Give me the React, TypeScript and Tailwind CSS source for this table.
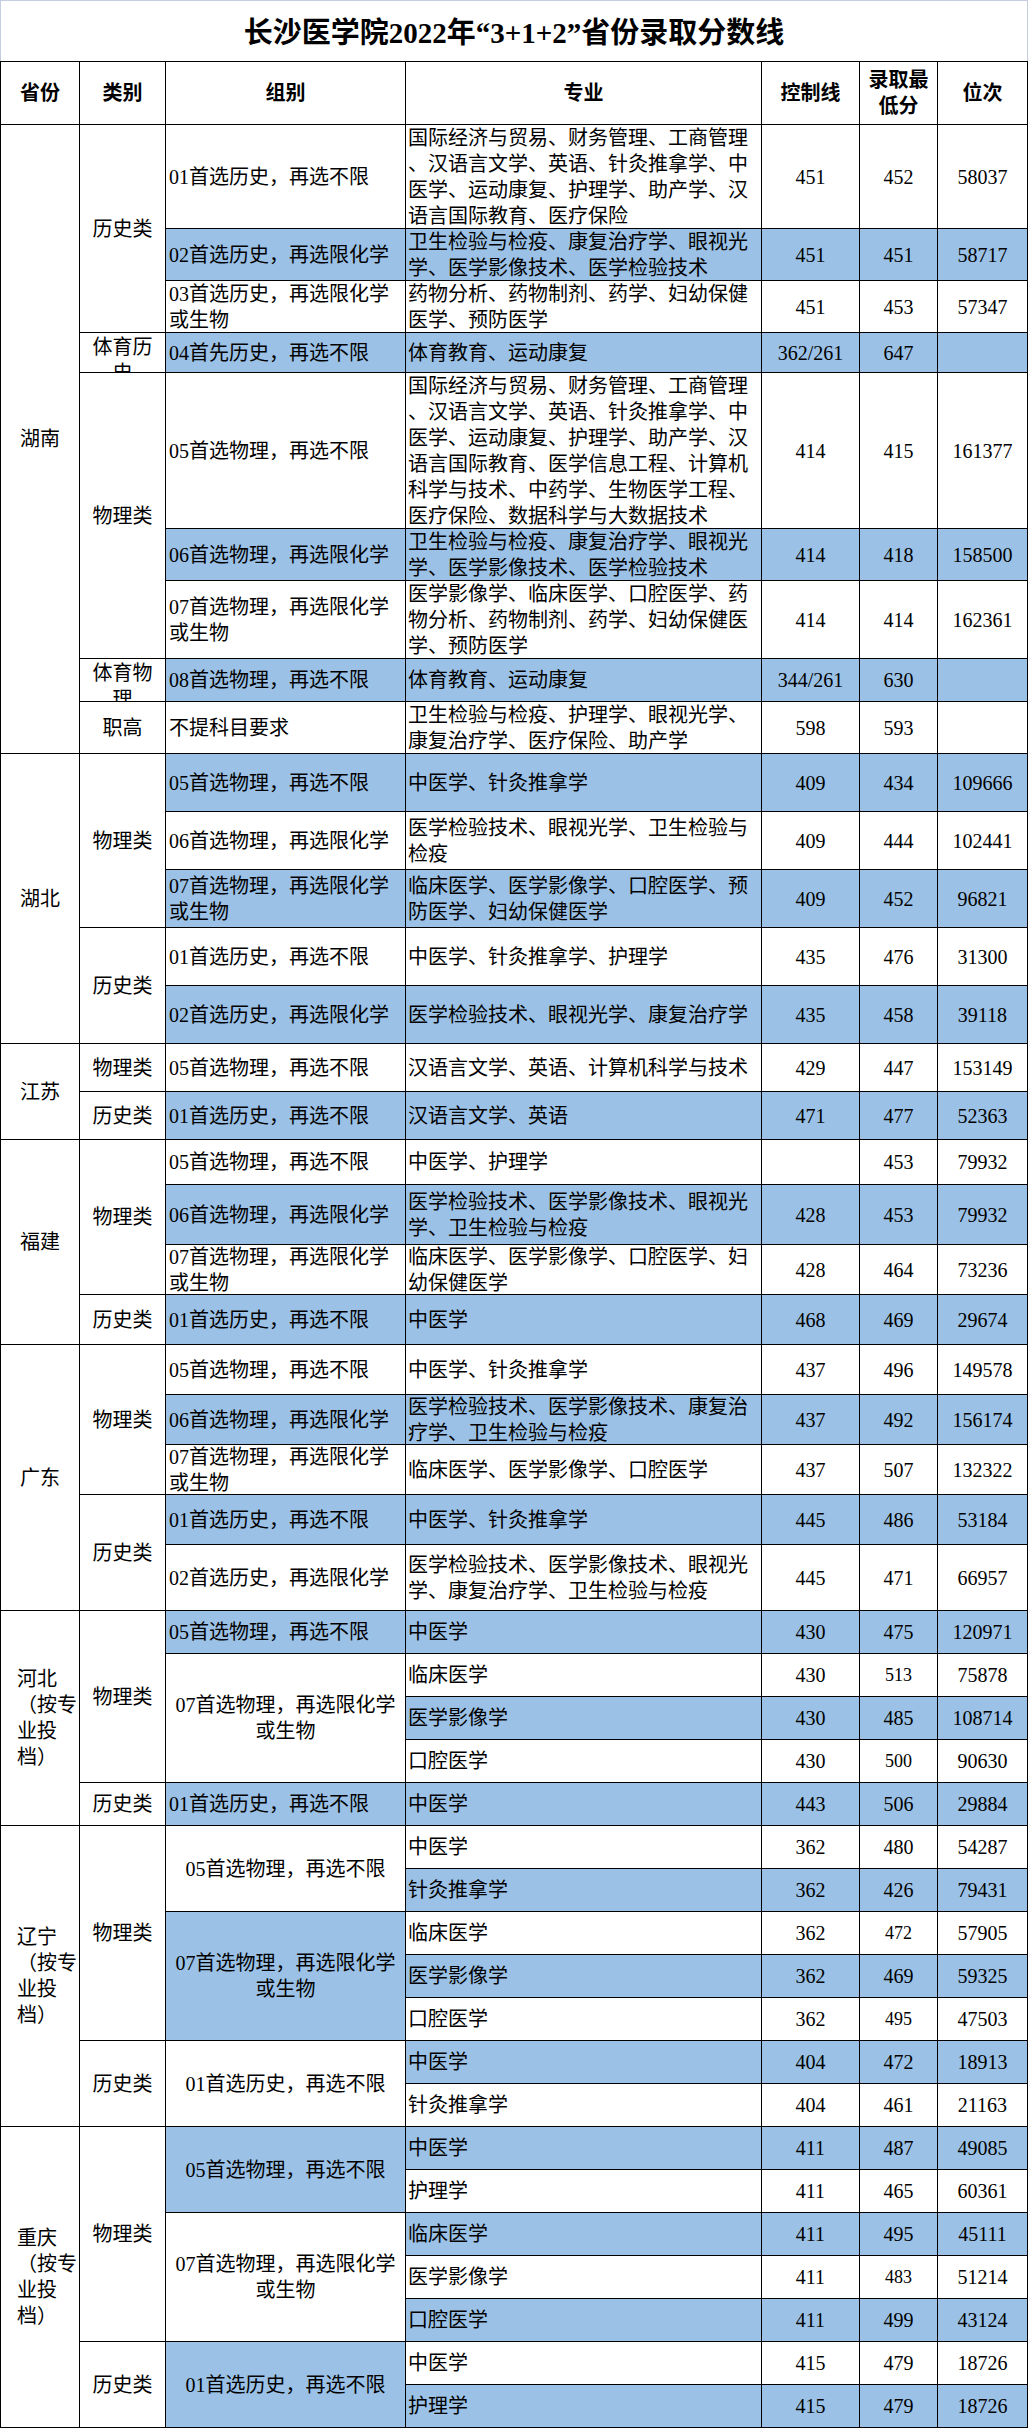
import React from 'react';

type Kind = 'head' | 'prov' | 'provL' | 'cat' | 'catTop' | 'grp' | 'grpC' | 'maj' | 'num';

type Cell = {
  lines: string[];
  kind: Kind;
  span?: number;
  blue?: boolean;
  small?: boolean;
};

const KIND: Record<Kind, string> = {
  head: 'items-center justify-center text-center font-bold',
  prov: 'items-center justify-center text-center',
  provL: 'items-center justify-start pl-[16px]',
  cat: 'items-center justify-center text-center',
  catTop: 'items-start justify-center text-center pt-px',
  grp: 'items-center justify-start pl-[3px]',
  grpC: 'items-center justify-center text-center',
  maj: 'items-center justify-start pl-[2px]',
  num: 'items-center justify-center',
};

const SPAN: Record<number, string> = {
  1: '',
  2: 'row-span-2',
  3: 'row-span-3',
  4: 'row-span-4',
  5: 'row-span-5',
  7: 'row-span-7',
  9: 'row-span-9',
};

const L = (s: string) => s.split('|');

const prov = (t: string, span: number, left = false): Cell => ({ lines: L(t), kind: left ? 'provL' : 'prov', span });
const cat = (t: string, span = 1, top = false): Cell => ({ lines: L(t), kind: top ? 'catTop' : 'cat', span });
const grpC = (t: string, span: number, blue = false): Cell => ({ lines: L(t), kind: 'grpC', span, blue });

// 组别 + 专业 + 控制线 + 最低分 + 位次, one line of the sheet
function row(grp: string, maj: string, a: string, b: string, c: string, blue = false, small = false): Cell[] {
  return [
    { lines: L(grp), kind: 'grp', blue },
    ...tail(maj, a, b, c, blue, small),
  ];
}

// 专业 onwards, for rows whose 组别 is merged
function tail(maj: string, a: string, b: string, c: string, blue = false, small = false): Cell[] {
  return [
    { lines: L(maj), kind: 'maj', blue },
    { lines: [a], kind: 'num', blue },
    { lines: [b], kind: 'num', blue, small },
    { lines: [c], kind: 'num', blue },
  ];
}

const G01 = '01首选历史，再选不限';
const G02 = '02首选历史，再选限化学';
const G03 = '03首选历史，再选限化学|或生物';
const G05 = '05首选物理，再选不限';
const G06 = '06首选物理，再选限化学';
const G07 = '07首选物理，再选限化学|或生物';

const cells: Cell[] = [
  { lines: ['省份'], kind: 'head' },
  { lines: ['类别'], kind: 'head' },
  { lines: ['组别'], kind: 'head' },
  { lines: ['专业'], kind: 'head' },
  { lines: ['控制线'], kind: 'head' },
  { lines: ['录取最', '低分'], kind: 'head' },
  { lines: ['位次'], kind: 'head' },

  // 湖南
  prov('湖南', 9),
  cat('历史类', 3),
  ...row(G01, '国际经济与贸易、财务管理、工商管理|、汉语言文学、英语、针灸推拿学、中|医学、运动康复、护理学、助产学、汉|语言国际教育、医疗保险', '451', '452', '58037'),
  ...row(G02, '卫生检验与检疫、康复治疗学、眼视光|学、医学影像技术、医学检验技术', '451', '451', '58717', true),
  ...row(G03, '药物分析、药物制剂、药学、妇幼保健|医学、预防医学', '451', '453', '57347'),
  cat('体育历|史', 1, true),
  ...row('04首先历史，再选不限', '体育教育、运动康复', '362/261', '647', '', true),
  cat('物理类', 3),
  ...row(G05, '国际经济与贸易、财务管理、工商管理|、汉语言文学、英语、针灸推拿学、中|医学、运动康复、护理学、助产学、汉|语言国际教育、医学信息工程、计算机|科学与技术、中药学、生物医学工程、|医疗保险、数据科学与大数据技术', '414', '415', '161377'),
  ...row(G06, '卫生检验与检疫、康复治疗学、眼视光|学、医学影像技术、医学检验技术', '414', '418', '158500', true),
  ...row(G07, '医学影像学、临床医学、口腔医学、药|物分析、药物制剂、药学、妇幼保健医|学、预防医学', '414', '414', '162361'),
  cat('体育物|理', 1, true),
  ...row('08首选物理，再选不限', '体育教育、运动康复', '344/261', '630', '', true),
  cat('职高'),
  ...row('不提科目要求', '卫生检验与检疫、护理学、眼视光学、|康复治疗学、医疗保险、助产学', '598', '593', ''),

  // 湖北
  prov('湖北', 5),
  cat('物理类', 3),
  ...row(G05, '中医学、针灸推拿学', '409', '434', '109666', true),
  ...row(G06, '医学检验技术、眼视光学、卫生检验与|检疫', '409', '444', '102441'),
  ...row(G07, '临床医学、医学影像学、口腔医学、预|防医学、妇幼保健医学', '409', '452', '96821', true),
  cat('历史类', 2),
  ...row(G01, '中医学、针灸推拿学、护理学', '435', '476', '31300'),
  ...row(G02, '医学检验技术、眼视光学、康复治疗学', '435', '458', '39118', true),

  // 江苏
  prov('江苏', 2),
  cat('物理类'),
  ...row(G05, '汉语言文学、英语、计算机科学与技术', '429', '447', '153149'),
  cat('历史类'),
  ...row(G01, '汉语言文学、英语', '471', '477', '52363', true),

  // 福建
  prov('福建', 4),
  cat('物理类', 3),
  ...row(G05, '中医学、护理学', '', '453', '79932'),
  ...row(G06, '医学检验技术、医学影像技术、眼视光|学、卫生检验与检疫', '428', '453', '79932', true),
  ...row(G07, '临床医学、医学影像学、口腔医学、妇|幼保健医学', '428', '464', '73236'),
  cat('历史类'),
  ...row(G01, '中医学', '468', '469', '29674', true),

  // 广东
  prov('广东', 5),
  cat('物理类', 3),
  ...row(G05, '中医学、针灸推拿学', '437', '496', '149578'),
  ...row(G06, '医学检验技术、医学影像技术、康复治|疗学、卫生检验与检疫', '437', '492', '156174', true),
  ...row(G07, '临床医学、医学影像学、口腔医学', '437', '507', '132322'),
  cat('历史类', 2),
  ...row(G01, '中医学、针灸推拿学', '445', '486', '53184', true),
  ...row(G02, '医学检验技术、医学影像技术、眼视光|学、康复治疗学、卫生检验与检疫', '445', '471', '66957'),

  // 河北
  prov('河北|（按专|业投|档）', 5, true),
  cat('物理类', 4),
  ...row(G05, '中医学', '430', '475', '120971', true),
  grpC(G07, 3),
  ...tail('临床医学', '430', '513', '75878', false, true),
  ...tail('医学影像学', '430', '485', '108714', true),
  ...tail('口腔医学', '430', '500', '90630', false, true),
  cat('历史类'),
  ...row(G01, '中医学', '443', '506', '29884', true),

  // 辽宁
  prov('辽宁|（按专|业投|档）', 7, true),
  cat('物理类', 5),
  grpC(G05, 2),
  ...tail('中医学', '362', '480', '54287'),
  ...tail('针灸推拿学', '362', '426', '79431', true),
  grpC(G07, 3, true),
  ...tail('临床医学', '362', '472', '57905', false, true),
  ...tail('医学影像学', '362', '469', '59325', true),
  ...tail('口腔医学', '362', '495', '47503', false, true),
  cat('历史类', 2),
  grpC(G01, 2),
  ...tail('中医学', '404', '472', '18913', true),
  ...tail('针灸推拿学', '404', '461', '21163'),

  // 重庆
  prov('重庆|（按专|业投|档）', 7, true),
  cat('物理类', 5),
  grpC(G05, 2, true),
  ...tail('中医学', '411', '487', '49085', true),
  ...tail('护理学', '411', '465', '60361'),
  grpC(G07, 3),
  ...tail('临床医学', '411', '495', '45111', true),
  ...tail('医学影像学', '411', '483', '51214', false, true),
  ...tail('口腔医学', '411', '499', '43124', true),
  cat('历史类', 2),
  grpC(G01, 2, true),
  ...tail('中医学', '415', '479', '18726'),
  ...tail('护理学', '415', '479', '18726', true),
];

function SheetCell({ c }: { c: Cell }) {
  const cls = [
    'flex overflow-hidden border-r border-b border-black',
    KIND[c.kind],
    SPAN[c.span ?? 1],
    c.blue ? 'bg-[#9bc2e6]' : 'bg-white',
    c.small ? 'text-[18px]' : '',
  ].join(' ');
  return (
    <div className={cls}>
      <div>
        {c.lines.map((l, i) => (
          <div key={i} className="whitespace-nowrap">
            {l}
          </div>
        ))}
      </div>
    </div>
  );
}

export default function App() {
  return (
    <div lang="zh-CN" className="w-[1028px] bg-white text-black font-['Liberation_Serif','Noto_Sans_CJK_SC',serif] text-[20px] leading-[26px]">
      <div className="h-[61px] flex items-center justify-center pt-[4px] border-t border-x border-[#c5cde0]">
        <h1 className="text-[29px] font-bold leading-none">长沙医学院2022年“3+1+2”省份录取分数线</h1>
      </div>
      <div className="grid grid-cols-[79px_86px_240px_356px_98px_78px_90px] grid-rows-[63px_104px_52px_52px_40px_156px_52px_78px_43px_52px_58px_58px_58px_58px_58px_48px_48px_45px_60px_50px_50px_50px_50px_50px_50px_66px_repeat(19,43px)] border-l border-t border-black">
        {cells.map((c, i) => (
          <SheetCell key={i} c={c} />
        ))}
      </div>
    </div>
  );
}
